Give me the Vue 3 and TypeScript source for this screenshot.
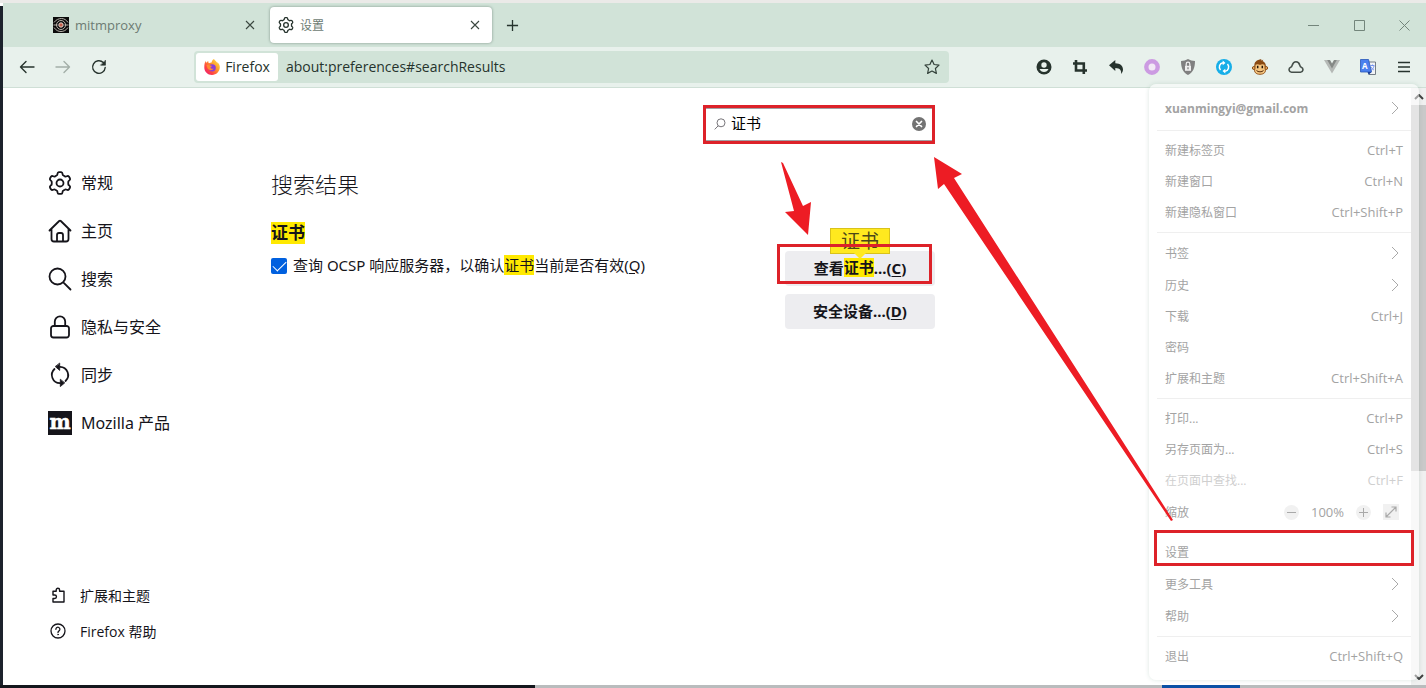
<script setup lang="ts">
import { ref } from 'vue'

interface MenuRow {
  label: string
  keys?: string
  sub?: boolean
  disabled?: boolean
  framed?: boolean
}

const query = ref('证书')
const address = ref('about:preferences#searchResults')
const ocsp = ref(true)

const categories = [
  { id: 'general', label: '常规' },
  { id: 'home', label: '主页' },
  { id: 'search', label: '搜索' },
  { id: 'privacy', label: '隐私与安全' },
  { id: 'sync', label: '同步' },
  { id: 'mozilla', label: 'Mozilla 产品' },
]

const menuTop: MenuRow[][] = [
  [
    { label: '新建标签页', keys: 'Ctrl+T' },
    { label: '新建窗口', keys: 'Ctrl+N' },
    { label: '新建隐私窗口', keys: 'Ctrl+Shift+P' },
  ],
  [
    { label: '书签', sub: true },
    { label: '历史', sub: true },
    { label: '下载', keys: 'Ctrl+J' },
    { label: '密码' },
    { label: '扩展和主题', keys: 'Ctrl+Shift+A' },
  ],
  [
    { label: '打印...', keys: 'Ctrl+P' },
    { label: '另存页面为...', keys: 'Ctrl+S' },
    { label: '在页面中查找...', keys: 'Ctrl+F', disabled: true },
  ],
]

const menuBottom: MenuRow[][] = [
  [
    { label: '设置', framed: true },
    { label: '更多工具', sub: true },
    { label: '帮助', sub: true },
  ],
  [{ label: '退出', keys: 'Ctrl+Shift+Q' }],
]

// Six-toothed cog on a 24px grid, teeth joined by concave valleys.
function cog(): string {
  const at = (deg: number, r: number) => {
    const a = (deg * Math.PI) / 180
    return `${(12 + r * Math.cos(a)).toFixed(2)} ${(12 + r * Math.sin(a)).toFixed(2)}`
  }
  let d = ''
  for (let k = 0; k < 6; k++) {
    const c = -90 + 60 * k
    d += `${k === 0 ? 'M' : 'L'}${at(c - 15, 9.6)}Q${at(c - 12, 11)} ${at(c - 6, 11)}L${at(c + 6, 11)}Q${at(c + 12, 11)} ${at(c + 15, 9.6)}`
    d += `Q${at(c + 18, 8.2)} ${at(c + 24, 8.3)}L${at(c + 36, 8.3)}Q${at(c + 42, 8.2)} ${at(c + 45, 9.6)}`
  }
  return d + 'Z'
}
const cogPath = cog()
</script>

<template>
  <div class="desktop">
    <div class="edge-top"></div>
    <div class="middle">
      <div class="edge-left"></div>
      <div class="window">
        <header class="tabs">
          <div class="tab">
            <svg class="i16" viewBox="0 0 16 16" aria-hidden="true">
              <rect width="16" height="16" fill="#0b0b0b" />
              <g fill="none" stroke="#b9b4ac">
                <path d="M1 5.5C3 2.5 6 1.500 8.500 1.500S13.500 3 15 5.500M1 10.500c2 3 4.500 4 7 4s5-1 7-4" />
                <circle cx="8" cy="8" r="4.500" />
                <path d="M.5 8h4M11.500 8h4" />
              </g>
              <circle cx="8" cy="8" r="2.200" fill="#c55b49" stroke="#e0d8d0" />
            </svg>
            <span class="tab-name">mitmproxy</span>
            <button class="close" aria-label="关闭 mitmproxy">
              <svg class="i10" viewBox="0 0 10 10"><path d="M1 1l8 8M9 1L1 9" /></svg>
            </button>
          </div>
          <div class="tab active">
            <svg class="i16 line" viewBox="0 0 24 24" aria-hidden="true">
              <path :d="cogPath" stroke-width="2" /><circle cx="12" cy="12" r="3.500" stroke-width="2" />
            </svg>
            <span class="tab-name small">设置</span>
            <button class="close" aria-label="关闭 设置">
              <svg class="i10" viewBox="0 0 10 10"><path d="M1 1l8 8M9 1L1 9" /></svg>
            </button>
          </div>
          <button class="new-tab" aria-label="新建标签页">
            <svg viewBox="0 0 14 14"><path d="M7 1v12M1 7h12" /></svg>
          </button>
          <div class="controls">
            <button aria-label="最小化"><svg viewBox="0 0 11 11"><path d="M0 5.500h11" /></svg></button>
            <button aria-label="最大化"><svg viewBox="0 0 11 11"><path d="M.5.5h10v10H.5z" /></svg></button>
            <button aria-label="关闭"><svg viewBox="0 0 11 11"><path d="M.5.5l10 10M10.500.5l-10 10" /></svg></button>
          </div>
        </header>

        <div class="toolbar">
          <button class="tool" aria-label="后退">
            <svg viewBox="0 0 16 16" class="line"><path d="M15 8H1.500M7 2.500L1.500 8 7 13.500" stroke-width="1.400" /></svg>
          </button>
          <button class="tool" aria-label="前进" disabled>
            <svg viewBox="0 0 16 16" class="line faint"><path d="M1 8h13.500M9 2.500L14.500 8 9 13.500" stroke-width="1.400" /></svg>
          </button>
          <button class="tool" aria-label="刷新">
            <svg viewBox="0 0 16 16" class="line">
              <path d="M14.200 8.500A6.300 6.300 0 1 1 12.300 3.500l1 1" stroke-width="1.400" />
              <path d="M14.500 1.500v4.700h-4.700z" fill="#26332d" stroke-width=".6" />
            </svg>
          </button>
          <div class="spacer"></div>
          <div class="urlbar">
            <button class="identity">
              <svg class="i16" viewBox="0 0 16 16" aria-hidden="true">
                <defs>
                  <linearGradient id="fox" x1="1" y1="0" x2="0" y2="1">
                    <stop offset="0" stop-color="#fff04a" /><stop offset=".4" stop-color="#ff9a2b" />
                    <stop offset=".7" stop-color="#ff4242" /><stop offset="1" stop-color="#e31587" />
                  </linearGradient>
                </defs>
                <path fill="url(#fox)" d="M15.400 6C15 4.800 13.800 3.300 13 3c.4.700.6 1.300.7 1.700C12.300 1.800 10.600 1.400 10 0 8.200 1 7.700 2.700 7.600 3.400 6.600 3.400 5.800 3.700 5 4.200 4.300 3.600 4.200 2.700 4.300 1.900 3.300 2.400 2.500 3.300 2.200 3.700 1.700 3.600 1.800 2.400 1.900 1.700.9 2.700.3 5.200.3 8.400c0 4.200 3.400 7.500 7.700 7.500s7.800-3.300 7.800-7.700c0-.8-.1-1.500-.4-2.200z" />
                <circle cx="8.200" cy="8.800" r="3.600" fill="#8a3fd6" />
                <path fill="#ff8b30" d="M2.500 6.200c1.200-.8 2.700-.5 3.600.3.700-.2 1.500 0 2 .4C7.600 7.600 6.700 7.800 6.500 8.400c.3 1.500 2.200 1.900 3.400.9-1 2.400-5 2.700-6.500-.2z" />
              </svg>
              <span>Firefox</span>
            </button>
            <input v-model="address" class="address" aria-label="地址" spellcheck="false" />
            <button class="star" aria-label="添加书签">
              <svg class="i16" viewBox="0 0 16 16">
                <path fill="none" stroke="#33413a" stroke-width="1.200" stroke-linejoin="round" d="M8 1l2.100 4.500 4.900.6-3.600 3.400 1 4.900L8 12l-4.400 2.400 1-4.900L1 6.100l4.900-.6z" />
              </svg>
            </button>
          </div>
          <div class="spacer"></div>
          <button class="tool" aria-label="账户">
            <svg viewBox="0 0 16 16"><circle cx="8" cy="8" r="7.500" fill="#26332d" /><circle cx="8" cy="6" r="2.700" fill="#e8f1ec" /><path d="M3.500 10h9A5 5 0 0 1 8 13a5 5 0 0 1-4.500-3z" fill="#e8f1ec" /></svg>
          </button>
          <button class="tool" aria-label="截图">
            <svg viewBox="0 0 16 16"><path d="M4 1v10.500h11M1 4.500h10.800V15" fill="none" stroke="#26332d" stroke-width="2.600" /></svg>
          </button>
          <button class="tool" aria-label="撤销">
            <svg viewBox="0 0 16 16"><path fill="#26332d" d="M1 6.200L7.300 1v3.200c5 .1 7.700 2.800 7.700 6.300 0 1.800-.8 3.400-2 4.500.7-3.500-.8-6-5.700-6.100v3z" /></svg>
          </button>
          <button class="tool" aria-label="圆环">
            <svg viewBox="0 0 16 16"><circle cx="8" cy="8" r="5.700" fill="#f2e9f5" stroke="#cc9be2" stroke-width="4.400" /></svg>
          </button>
          <button class="tool" aria-label="隐私盾">
            <svg viewBox="0 0 16 16"><path fill="#808080" d="M8 0c2 1.300 4.500 1.900 7 2 0 7-2 11.500-7 14C3 13.500 1 9 1 2c2.500-.1 5-.7 7-2z" /><rect x="5" y="6.800" width="6" height="5" fill="#efefef" /><path d="M6.200 7V5a1.800 1.800 0 0 1 3.600 0v2" fill="none" stroke="#efefef" stroke-width="1.200" /><path d="M8 8.300v2" stroke="#777" stroke-width="1.200" /></svg>
          </button>
          <button class="tool" aria-label="同步扩展">
            <svg viewBox="0 0 16 16"><circle cx="8" cy="8" r="8" fill="#16aee8" /><path d="M7 3.700A4.400 4.400 0 0 0 4.500 11M9 12.300A4.400 4.400 0 0 0 11.500 5" fill="none" stroke="#fff" stroke-width="1.500" /><path d="M6.700 1.600L9.500 4 6.700 6.300zM9.300 14.400L6.500 12l2.800-2.300z" fill="#fff" /></svg>
          </button>
          <button class="tool" aria-label="脚本管理">
            <svg viewBox="0 0 16 16"><path d="M2.500 7C2 3 4.500 1 9.500 0L8.800 1.500l2.500-.7-.8 1.200C13 3 14 5 13.700 7z" fill="#8a4a12" /><circle cx="1.900" cy="9" r="1.500" fill="#eeb469" stroke="#8a4a12" /><circle cx="14.100" cy="9" r="1.500" fill="#eeb469" stroke="#8a4a12" /><path d="M3 6.500C4 4 7 5 8 5.500 9 5 12 4 13 6.500v3C14.500 13 12 15.300 8 15.300S1.500 13 3 9.500z" fill="#f5c680" stroke="#8a4a12" stroke-width=".9" /><path d="M5.700 6.700v2.500M10.300 6.700v2.500" stroke="#24150a" stroke-width="1.500" /><path d="M4.500 11.500c1.500 1.800 5.500 1.800 7 0" fill="none" stroke="#54290c" /></svg>
          </button>
          <button class="tool" aria-label="云">
            <svg viewBox="0 0 16 16"><path d="M3.500 13.200h9a2.600 2.600 0 0 0 .8-5C12.400 8 12 7 11.700 6 11 3.500 9.700 2.800 8 2.800S5 3.500 4.300 6C4 7 3.600 8 2.700 8.200a2.600 2.600 0 0 0 .8 5z" fill="none" stroke="#46504b" stroke-width="1.600" /></svg>
          </button>
          <button class="tool" aria-label="Vue">
            <svg viewBox="0 0 16 16"><path d="M0 1h5l3 5 3-5h5L8 14.500z" fill="#b5b9b6" /><path d="M3.200 1H6l2 3.400L10 1h2.800L8 9.400z" fill="#858986" /></svg>
          </button>
          <button class="tool" aria-label="翻译">
            <svg viewBox="0 0 16 16"><path d="M8 3h7.500v12.500H9z" fill="#f2f4f6" stroke="#66707a" stroke-width=".9" /><path d="M10.500 6.500h4M12.500 5.500v1M14 7c-.5 2-1.500 3.500-3 4.500M11 8c.8 1.500 2 2.500 3 3" fill="none" stroke="#6c8ff0" stroke-width=".9" /><path d="M.5.500h8l3 12.500H.5z" fill="#4a80ee" stroke="#2857b7" stroke-width=".8" /><path d="M7.500 13l1.200 2.800L11.500 13z" fill="#1a3f99" /><text x="2" y="9.800" font-size="8" font-weight="700" fill="#fff" font-family="Open Sans, sans-serif">A</text></svg>
          </button>
          <button class="tool" aria-label="菜单">
            <svg viewBox="0 0 16 16"><path d="M2 3.500h12M2 8h12M2 12.500h12" stroke="#26332d" stroke-width="1.300" /></svg>
          </button>
        </div>

        <div class="page">
          <nav class="side">
            <div>
              <a v-for="c in categories" :key="c.id" href="#" class="cat">
                <svg v-if="c.id === 'mozilla'" class="i24" viewBox="0 0 24 24" aria-hidden="true">
                  <rect width="24" height="24" fill="#15141a" />
                  <text x="12" y="18" text-anchor="middle" font-size="20" font-weight="700" fill="#fff" stroke="#fff" stroke-width=".5" font-family="DejaVu Serif, serif">m</text>
                </svg>
                <svg v-else class="i24 ink" viewBox="0 0 24 24" aria-hidden="true">
                  <template v-if="c.id === 'general'"><path :d="cogPath" /><circle cx="12" cy="12" r="3.500" /></template>
                  <path v-else-if="c.id === 'home'" d="M1.500 11.500L11.200 2a1.200 1.200 0 0 1 1.600 0l9.700 9.500M3.500 9.800V20a2.500 2.500 0 0 0 2.500 2.500h12a2.500 2.500 0 0 0 2.500-2.500V9.800M9 22.500V16a2 2 0 0 1 2-2h2a2 2 0 0 1 2 2v6.500" />
                  <path v-else-if="c.id === 'search'" d="M17.500 9.500a8 8 0 1 1-16 0 8 8 0 0 1 16 0zM15.300 15.300l7.200 7.200" />
                  <path v-else-if="c.id === 'privacy'" d="M5.500 11h13A2.500 2.500 0 0 1 21 13.500v6.500a2.500 2.500 0 0 1-2.500 2.500h-13A2.500 2.500 0 0 1 3 20v-6.500A2.500 2.500 0 0 1 5.500 11zM6.800 11V6.500a5.200 5.200 0 0 1 10.400 0V11" />
                  <template v-else>
                    <path d="M12 3.800A8.200 8.200 0 0 1 17.500 18M12 20.200A8.200 8.200 0 0 1 6.500 6" />
                    <path d="M11.700.4v7L7.500 3.800zM12.300 16.600v7l4.200-3.500z" fill="#15141a" stroke-width=".8" />
                  </template>
                </svg>
                <span>{{ c.label }}</span>
              </a>
            </div>
            <div>
              <a href="#" class="foot">
                <svg class="i16 ink" viewBox="0 0 16 16" aria-hidden="true">
                  <path stroke-width="1.400" d="M3 4.200h3.200V3a1.700 1.700 0 0 1 3.400 0v1.200H14V15H3v-3.500h1.700a1.700 1.700 0 0 0 0-3.500H3z" />
                </svg>
                <span>扩展和主题</span>
              </a>
              <a href="#" class="foot">
                <svg class="i16 ink" viewBox="0 0 16 16" aria-hidden="true">
                  <circle cx="8" cy="8" r="7" stroke-width="1.300" />
                  <path stroke-width="1.300" d="M5.900 6.300A2 2 0 1 1 9 7.900c-.7.400-1 .7-1 1.600" /><circle cx="8" cy="11.600" r=".5" stroke-width=".7" />
                </svg>
                <span>Firefox 帮助</span>
              </a>
            </div>
          </nav>

          <main class="main">
            <div class="search">
              <svg class="glass" viewBox="0 0 12 12" aria-hidden="true"><circle cx="7" cy="4.800" r="4" /><path d="M4.200 7.800L.7 11.400" /></svg>
              <input v-model="query" aria-label="在设置中查找" />
              <button aria-label="清除" @click="query = ''">
                <svg viewBox="0 0 14 14"><circle cx="7" cy="7" r="7" fill="#737373" /><path d="M4.500 4.500l5 5M9.500 4.500l-5 5" stroke="#fff" stroke-width="1.700" stroke-linecap="round" /></svg>
              </button>
              <span class="frame"></span>
            </div>
            <h1>搜索结果</h1>
            <h2><mark>证书</mark></h2>
            <div class="group">
              <label class="check">
                <input v-model="ocsp" type="checkbox" />
                <span>查询 OCSP 响应服务器，以确认<mark>证书</mark>当前是否有效(<u>Q</u>)</span>
              </label>
              <div class="buttons">
                <div class="hit">
                  <button>查看<mark>证书</mark>...(<u>C</u>)</button>
                  <span class="tip">证书</span>
                  <span class="frame"></span>
                </div>
                <button>安全设备...(<u>D</u>)</button>
              </div>
            </div>
          </main>

          <div class="scroll" aria-hidden="true">
            <div class="scroll-end"><svg viewBox="0 0 10 6"><path d="M1 5l4-4 4 4" /></svg></div>
            <div class="track"><div class="thumb"></div></div>
            <div class="scroll-end"><svg viewBox="0 0 10 6"><path d="M1 1l4 4 4-4" /></svg></div>
          </div>
        </div>
      </div>
    </div>
    <div class="edge-bottom"><span class="dark"></span><span class="grey"></span><span class="blue"></span><span class="grey end"></span></div>

    <div class="menu">
      <button class="row account"><b>xuanmingyi@gmail.com</b>
        <svg class="chev" viewBox="0 0 8 14"><path d="M1 1l6 6-6 6" /></svg>
      </button>
      <template v-for="(g, gi) in menuTop" :key="gi">
        <hr />
        <button v-for="r in g" :key="r.label" class="row" :class="{ sub: r.sub }" :disabled="r.disabled">
          <span>{{ r.label }}</span>
          <svg v-if="r.sub" class="chev" viewBox="0 0 8 14"><path d="M1 1l6 6-6 6" /></svg>
          <span v-else class="keys">{{ r.keys }}</span>
        </button>
      </template>
      <div class="row sub">
        <span>缩放</span>
        <div class="zoom">
          <button class="round" aria-label="缩小"><svg viewBox="0 0 9 9"><path d="M0 4.500h9" /></svg></button>
          <span class="pct">100%</span>
          <button class="round" aria-label="放大"><svg viewBox="0 0 9 9"><path d="M0 4.500h9M4.500 0v9" /></svg></button>
          <button class="full" aria-label="全屏"><svg viewBox="0 0 12 12"><path d="M1.500 10.500l9-9M6.500 1h4.500v4.500M1 6.500V11h4.500" /></svg></button>
        </div>
      </div>
      <template v-for="(g, gi) in menuBottom" :key="gi">
        <hr />
        <button v-for="r in g" :key="r.label" class="row" :class="{ sub: r.sub }">
          <span>{{ r.label }}</span>
          <svg v-if="r.sub" class="chev" viewBox="0 0 8 14"><path d="M1 1l6 6-6 6" /></svg>
          <span v-else class="keys">{{ r.keys }}</span>
          <span v-if="r.framed" class="frame"></span>
        </button>
      </template>
    </div>

    <svg class="arrows" width="1426" height="688" viewBox="0 0 1426 688" aria-hidden="true">
      <path d="M781 162L783 163 803 206 811 202 808 235 785 212 794 211z" />
      <path d="M934 157L962 174 954 178 1173 520 1171 521 944 184 938 189z" />
    </svg>
  </div>
</template>

<style>
body { margin: 0; }
</style>

<style scoped>
* { box-sizing: border-box; }
.desktop {
  position: relative;
  display: flex;
  flex-direction: column;
  min-height: 100vh;
  overflow: hidden;
  font-family: "Open Sans", "Noto Sans CJK SC", sans-serif;
  color: #15141a;
  background: #fff;
}
button, input { font: inherit; color: inherit; }
button { display: flex; align-items: center; justify-content: center; padding: 0; border: 0; background: none; }
svg { display: block; flex: none; }
.i10 { width: 10px; height: 10px; }
.i16 { width: 16px; height: 16px; }
.i24 { width: 24px; height: 24px; }
.cat svg { overflow: visible; }
.line { fill: none; stroke: #26332d; stroke-linejoin: round; stroke-linecap: round; }
.faint { stroke: #a3afa8; }
.ink { fill: none; stroke: #15141a; stroke-width: 1.8; stroke-linejoin: round; stroke-linecap: round; }
mark { background: #ffe900; color: inherit; }
.frame { position: absolute; border: 3px solid #dd2229; pointer-events: none; }

.edge-top { height: 3px; background: #ebeae8; }
.middle { flex: 1; display: flex; }
.edge-left { width: 3px; margin-top: 3px; background: #1c222c; }
.edge-bottom { display: flex; height: 3px; }
.edge-bottom .dark { flex: 535; background: #14171d; }
.edge-bottom .grey { flex: 627; background: #b9bcbd; }
.edge-bottom .blue { flex: 78; background: #0a50a5; }
.edge-bottom .end { flex: 186; }
.window { flex: 1; min-width: 0; display: flex; flex-direction: column; }

.tabs { display: flex; align-items: center; height: 44px; padding-left: 42px; background: #d1e3d8; }
.tab { display: flex; align-items: center; gap: 6px; width: 222px; height: 36px; padding: 0 12px 0 8px; border-radius: 4px; font-size: 13px; color: #6d7b73; }
.tab.active { background: #fff; margin-left: 3px; box-shadow: 0 0 3px #7f9388; }
.tab-name { flex: 1; }
.small { font-size: 12px; }
.close svg { fill: none; stroke: #3b4740; stroke-width: 1.1; }
.new-tab { width: 40px; height: 36px; }
.new-tab svg { width: 13px; height: 13px; stroke: #26332d; stroke-width: 1.4; }
.controls { display: flex; margin-left: auto; }
.controls button { width: 46px; height: 36px; }
.controls button:last-child { width: 44px; }
.controls svg { width: 11px; height: 11px; fill: none; stroke: #73857b; }

.toolbar { display: flex; align-items: center; height: 41px; padding: 0 4px 0 6px; background: #e8f1ec; border-bottom: 1px solid #cfdfd6; }
.tool { width: 36px; height: 32px; flex: none; }
.tool svg { width: 16px; height: 16px; }
.spacer { flex: 78; }
.urlbar { flex: 752; min-width: 0; display: flex; align-items: center; height: 32px; padding: 0 9px 0 2px; border-radius: 4px; background: #d1e3d8; font-size: 14px; color: #26332d; }
.urlbar input, .identity span { padding-bottom: 2px; }
.identity { gap: 5px; height: 28px; padding: 0 8px; border-radius: 3px; background: #fff; }
.address { flex: 1; min-width: 0; padding: 0 8px; border: 0; outline: 0; background: none; }

.page { flex: 1; display: flex; background: #fff; }
.side { width: 268px; flex: none; display: flex; flex-direction: column; justify-content: space-between; padding: 71px 0 36px 45px; }
.side a { display: flex; align-items: center; color: inherit; text-decoration: none; }
.cat { gap: 9px; height: 48px; font-size: 16px; }
.cat span { padding-bottom: 2px; }
.cat, .main { font-family: "Noto Sans", "Noto Sans CJK SC", sans-serif; }
.foot { gap: 14px; height: 36px; padding-left: 2px; font-size: 14px; }

.main { flex: 1; min-width: 0; max-width: 664px; padding-top: 20px; }
.search { position: relative; display: flex; align-items: center; width: 226px; height: 33px; margin: 0 3px 0 auto; padding: 0 6px 2px 8px; border: solid #a3a0a3; border-width: 1px 0; font-size: 15px; }
.search .glass { width: 12px; height: 12px; fill: none; stroke: #77757a; }
.search input { flex: 1; min-width: 0; padding: 0 5px 2px; border: 0; outline: 0; background: none; color: #000; }
.search button svg { width: 14px; height: 14px; }
.search .frame { inset: -4px -3px; }
h1 { margin: 27px 0 0; font-size: 22px; line-height: 32px; font-weight: 300; }
h2 { margin: 20px 0 0; font-size: 17px; line-height: 26px; font-weight: 700; }
h2 mark { display: inline-block; line-height: 22px; }
.group { display: flex; justify-content: space-between; margin-top: 5px; }
.check { display: flex; align-items: center; gap: 6px; height: 30px; font-size: 15px; }
.check span { padding-bottom: 4px; }
.check mark { display: inline-block; line-height: 20px; }
.check input { appearance: none; width: 16px; height: 16px; margin: 0; border-radius: 2px; background: #0060df; display: grid; place-items: center; }
.check input:checked::before { content: ""; width: 12px; height: 6px; margin-top: -3px; border: solid #fff; border-width: 0 0 1px 1px; transform: rotate(-45deg); }
.buttons { display: flex; flex-direction: column; gap: 8px; width: 150px; }
.buttons button { width: 100%; height: 35px; padding-bottom: 2px; border-radius: 4px; background: #ededf0; font-size: 15px; font-weight: 700; }
.buttons mark { line-height: 19px; }
u { text-underline-offset: 2px; }
.hit { position: relative; }
.hit .frame { inset: -7px 3px 2px -8px; }
.tip { position: absolute; left: 45px; top: -23px; width: 60px; height: 26px; border: 1px solid #d9c21a; background: #ffe91f; color: #4b4718; font-size: 19px; line-height: 24px; text-align: center; }
.tip::after { content: ""; position: absolute; left: 23px; top: 24px; border: 6px solid transparent; border-top-color: #ffe91f; border-bottom: 0; }

.scroll { display: flex; flex-direction: column; width: 15px; margin-left: auto; background: #f0f0f0; }
.scroll-end { display: grid; place-items: center; height: 17px; }
.scroll-end svg { width: 10px; height: 6px; fill: none; stroke: #404040; stroke-width: 2; }
.track { flex: 1; }
.thumb { height: 65%; background: #c9c9c9; }

.menu { position: absolute; top: 84px; right: 7px; width: 270px; padding: 6px 0 8px; border-radius: 7px; background: rgba(255, 255, 255, .5); box-shadow: 0 0 4px rgba(90, 140, 120, .22); font-size: 12px; color: #a3a3a3; }
.menu .row { position: relative; display: flex; align-items: center; justify-content: space-between; width: 100%; height: 31px; padding: 0 16px 2px; }
.menu .row.sub { height: 32px; padding-bottom: 0; }
.menu .row.account { height: 36px; padding-bottom: 0; }
.menu .row:disabled { color: #cfcfcf; }
.menu hr { height: 1px; margin: 4px 8px; border: 0; background: #efefef; }
.menu svg { fill: none; stroke: #a9a9a9; }
.menu .chev { width: 8px; height: 14px; margin-right: 4px; }
.menu .frame { inset: -7px 5px 2px; }
.keys, .pct { font-size: 13px; }
.zoom { display: flex; align-items: center; margin-right: 4px; }
.zoom button { background: #f1f1f1; }
.round { width: 15px; height: 15px; border-radius: 50%; }
.round svg { width: 9px; height: 9px; }
.pct { width: 57px; text-align: center; }
.full { width: 16px; height: 16px; margin-left: 12px; }
.full svg { width: 12px; height: 12px; stroke-width: 1.2; }

.arrows { position: absolute; left: 0; top: 0; fill: #ed1c24; pointer-events: none; }
</style>
